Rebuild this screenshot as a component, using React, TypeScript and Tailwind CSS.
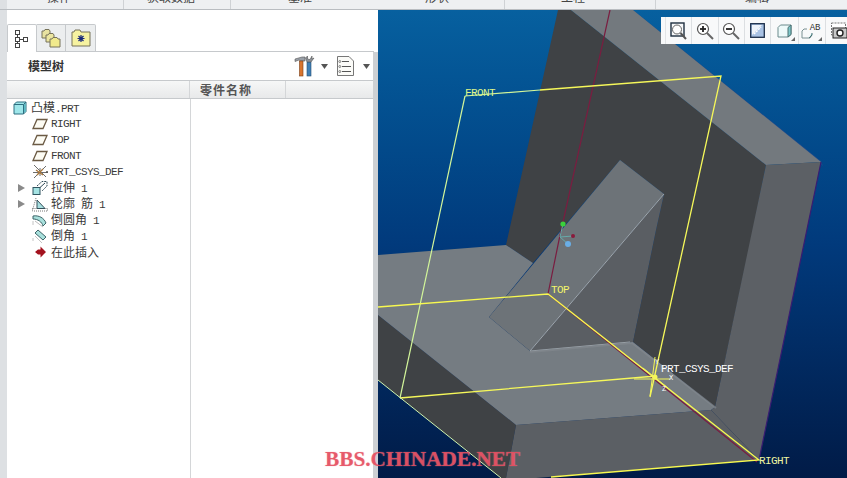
import React from 'react'

const MONO = "font-['Liberation_Mono','Noto_Sans_CJK_SC',monospace]"

// latin runs are 6px wide per char, cjk 12px, like the old system font in the picture
const Label = ({text}: {text: string}) => {
  const parts = text.match(/[\u4e00-\u9fff]+|[^\u4e00-\u9fff]+/g) || []
  return (
    <span className="inline-flex items-baseline whitespace-pre leading-[14px] text-[#3a3a3a]">
      {parts.map((p, i) =>
        /[\u4e00-\u9fff]/.test(p) ? (
          <span key={i} className="text-[12px] font-['Noto_Sans_CJK_SC',sans-serif]">{p}</span>
        ) : (
          <span key={i} className={`text-[11px] tracking-[-0.6px] ${MONO}`}>{p}</span>
        ),
      )}
    </span>
  )
}

const Plane = () => (
  <svg width="16" height="14" viewBox="0 0 16 14">
    <path d="M5 2.5H15L11 11.5H1Z" fill="#fdfcf4" stroke="#6b5a44" strokeWidth="1.3" />
  </svg>
)

const Csys = () => (
  <svg width="17" height="16" viewBox="0 0 17 16">
    <path d="M2 1L14 13M14 2L2 14M8 4V12M1 8.5H16" stroke="#6d6d6d" strokeWidth="1" />
    <path d="M4 6L11 11M11 5L5 11" stroke="#a8763a" strokeWidth="1.4" />
    <path d="M14 7l2 2M16 7l-2 2" stroke="#555" strokeWidth="0.8" />
  </svg>
)

const Extrude = () => (
  <svg width="16" height="16" viewBox="0 0 16 16">
    <rect x="1" y="7.5" width="7" height="7" fill="#a5e3e3" stroke="#2f5560" />
    <path d="M5 6L10 1.5H15V6L10 11" fill="none" stroke="#2f4a55" strokeDasharray="2 1" />
    <path d="M8 7.5L13 3" stroke="#2f4a55" />
  </svg>
)

const Rib = () => (
  <svg width="17" height="16" viewBox="0 0 17 16">
    <rect x="0.5" y="12.5" width="15" height="2.5" fill="none" stroke="#777" strokeDasharray="1 1" />
    <path d="M4 2L1 12.5" stroke="#777" strokeDasharray="1 1" />
    <path d="M5 4L13 12.5H5Z" fill="#a8dfe0" stroke="#35505a" />
  </svg>
)

const Round = () => (
  <svg width="17" height="16" viewBox="0 0 17 16">
    <path d="M1 4C7 3 12 6 14 11L11 14C10 10 6 7 1 7Z" fill="#a8e0dc" stroke="#3d6468" />
    <path d="M3 9L11 15" stroke="#bbb" />
    <path d="M1 9V13" stroke="#c4c4c4" />
  </svg>
)

const Chamfer = () => (
  <svg width="17" height="16" viewBox="0 0 17 16">
    <path d="M6 2L14 9L11 12L3 5Z" fill="#a8e0dc" stroke="#3d6468" />
    <path d="M3 8L10 15M1 10V13" stroke="#c4c4c4" />
  </svg>
)

const InsertArrow = () => (
  <svg width="15" height="14" viewBox="0 0 15 14">
    <path d="M3 7L6 4.5H8.5V1.5L14 7L8.5 12.5V9.5H6Z" fill="#a3121e" />
  </svg>
)

const PartCube = () => (
  <svg width="14" height="14" viewBox="0 0 14 14">
    <path d="M1 3.5L3.5 1H13V10.5L10.5 13H1Z" fill="#9ee6ea" stroke="#2e6f80" />
    <path d="M1 3.5H10.5V13M10.5 3.5L13 1" fill="none" stroke="#2e6f80" />
    <rect x="11" y="3" width="1.5" height="8" fill="#5cbcc6" />
  </svg>
)

const rows = [
  {text: 'RIGHT', icon: <Plane />},
  {text: 'TOP', icon: <Plane />},
  {text: 'FRONT', icon: <Plane />},
  {text: 'PRT_CSYS_DEF', icon: <Csys />},
  {text: '拉伸 1', icon: <Extrude />, arrow: true},
  {text: '轮廓 筋 1', icon: <Rib />, arrow: true},
  {text: '倒圆角 1', icon: <Round />},
  {text: '倒角 1', icon: <Chamfer />},
  {text: '在此插入', icon: <InsertArrow />},
]

const Caret = () => (
  <svg width="7" height="5" viewBox="0 0 7 5" className="block">
    <path d="M0 0H7L3.5 5Z" fill="#555" />
  </svg>
)

const TreeTabIcon = () => (
  <svg width="16" height="20" viewBox="0 0 16 20">
    <g fill="#fff" stroke="#444">
      <rect x="1.5" y="1.5" width="4" height="4" />
      <rect x="1.5" y="8.5" width="4" height="4" />
      <rect x="1.5" y="14.5" width="4" height="4" />
      <rect x="9.5" y="8.5" width="4" height="4" />
    </g>
    <path d="M3.5 5.5V8.5M3.5 12.5V14.5M5.5 10.5H9.5" stroke="#444" />
  </svg>
)

const FoldersIcon = () => (
  <svg width="20" height="20" viewBox="0 0 20 20">
    <path d="M1 3H3L4 1.5H8L9 3V10H1Z" fill="#e8e2a0" stroke="#77735a" />
    <path d="M5 7H7L8 5.5H12L13 7V14H5Z" fill="#ece69f" stroke="#77735a" />
    <path d="M9 11H11L12 9.5H16L17 11H19V19H9Z" fill="#f1ea8c" stroke="#77735a" />
  </svg>
)

const StarFolderIcon = () => (
  <svg width="20" height="18" viewBox="0 0 20 18">
    <path d="M1 3H3L4 1H9L10 3H19V17H1Z" fill="#f6f2a0" stroke="#77735a" />
    <path d="M10 6V13M6.5 9.5H13.5M7.5 7L12.5 12M12.5 7L7.5 12" stroke="#1a2a7a" strokeWidth="1.2" />
  </svg>
)

const ToolsIcon = () => (
  <svg width="21" height="22" viewBox="0 0 21 22">
    <path d="M1 4L8 2H11V6H7L5 5L1 6.5Z" fill="#9aa0a8" stroke="#555" strokeWidth="0.6" />
    <rect x="5.5" y="6" width="3.5" height="15" fill="#d9752e" stroke="#7a3d14" strokeWidth="0.6" />
    <rect x="13" y="7" width="4" height="14" fill="#3f7fb5" stroke="#274f74" strokeWidth="0.6" />
    <path d="M13 7L11.5 3L13.5 1V4L16 4.5L18 1V4L20 3L17 7Z" fill="#8b9097" stroke="#555" strokeWidth="0.6" />
  </svg>
)

const ListIcon = () => (
  <svg width="17" height="20" viewBox="0 0 17 20" className="block">
    <path d="M0.5 0.5H12L16.5 5V19.5H0.5Z" fill="#fbfbf8" stroke="#777" />
    <path d="M5 5.5H12M5 10.5H14M5 15.5H14" stroke="#555" />
    <circle cx="2.8" cy="5.5" r="1" fill="none" stroke="#555" strokeWidth="0.7" />
    <circle cx="2.8" cy="10.5" r="1" fill="none" stroke="#555" strokeWidth="0.7" />
    <circle cx="2.8" cy="15.5" r="1" fill="none" stroke="#555" strokeWidth="0.7" />
  </svg>
)

const Sidebar = () => (
  <div className="w-[378px] shrink-0 flex bg-white">
    <div className="w-[7px] bg-[#dde0e3]" />
    <div className="flex-1 flex flex-col pt-[14px]">
      <div className="h-[28px] flex items-end pr-[4px]">
        <div className="w-[30px] h-[28px] flex items-center justify-center bg-white border border-b-0 border-[#c6c9cc] rounded-t-[2px]">
          <TreeTabIcon />
        </div>
        <div className="w-[29px] h-[28px] flex items-center justify-center bg-[#eceeef] border-y border-r border-[#c6c9cc]">
          <FoldersIcon />
        </div>
        <div className="w-[30px] h-[28px] flex items-center justify-center bg-[#eceeef] border-y border-r border-[#c6c9cc] rounded-tr-[2px]">
          <StarFolderIcon />
        </div>
        <div className="flex-1 border-b border-[#c6c9cc]" />
      </div>
      <div className="flex-1 flex">
        <div className="flex-1 flex flex-col">
          <div className="h-[29px] flex items-center pl-[21px] border-b border-[#c6c9cc]">
            <span className="text-[12px] font-bold text-[#333] font-['Noto_Sans_CJK_SC',sans-serif]">模型树</span>
            <div className="ml-auto flex items-center">
              <ToolsIcon />
              <span className="ml-[6px]"><Caret /></span>
              <span className="ml-[9px]"><ListIcon /></span>
              <span className="ml-[9px] mr-[3px]"><Caret /></span>
            </div>
          </div>
          <div className="h-[18px] flex bg-linear-to-b from-[#f6f7f7] to-[#e8e9ea] border-b border-[#c6c9cc]">
            <div className="w-[183px] border-r border-[#d4d6d8]" />
            <div className="w-[96px] border-r border-[#d4d6d8] pl-[10px] flex items-center">
              <span className="text-[12px] font-bold tracking-[1px] text-[#555] font-['Noto_Sans_CJK_SC',sans-serif]">零件名称</span>
            </div>
          </div>
          <div className="flex-1 flex">
            <div className="w-[184px] border-r border-[#d4d6d8] pt-[1px]">
              <div className="h-[16px] flex items-center pl-[6px]">
                <PartCube />
                <span className="ml-[4px] flex"><Label text="凸模.PRT" /></span>
              </div>
              {rows.map((r) => (
                <div key={r.text} className="h-[16px] flex items-center relative pl-[25px]">
                  {r.arrow && (
                    <span className="absolute left-[11px] top-[4px] w-0 h-0 border-y-[4px] border-y-transparent border-l-[7px] border-l-[#8a8a8a]" />
                  )}
                  <span className="w-[19px] flex justify-start shrink-0">{r.icon}</span>
                  <Label text={r.text} />
                </div>
              ))}
            </div>
          </div>
        </div>
        <div className="w-[5px] bg-[#cdd0d3]" />
      </div>
    </div>
  </div>
)

const Mag = ({sign}: {sign?: 'plus' | 'minus'}) => (
  <svg width="18" height="18" viewBox="0 0 18 18">
    <circle cx="7" cy="7" r="5.5" fill="#fff" stroke="#555" strokeWidth="1.2" />
    <path d="M11 11L17 17" stroke="#666" strokeWidth="2" />
    {sign && <path d="M4 7H10" stroke="#222" strokeWidth="1.8" />}
    {sign === 'plus' && <path d="M7 4V10" stroke="#222" strokeWidth="1.8" />}
  </svg>
)

const ViewTools = () => (
  <div className="absolute left-[283px] top-[7px] h-[27px] w-[186px] bg-[#f8f9fa] flex items-center overflow-hidden">
    <div className="w-[5px] h-full border-r border-[#e2e4e6]" />
    <div className="w-[27px] h-full flex items-center justify-center border-r border-[#dcdfe2]">
      <svg width="17" height="18" viewBox="0 0 17 18">
        <rect x="1" y="1" width="13" height="13" fill="none" stroke="#1f2f3f" strokeWidth="1.4" />
        <circle cx="7" cy="7.5" r="4.5" fill="#fff" stroke="#666" />
        <path d="M10.5 11L16 17" stroke="#555" strokeWidth="2" />
      </svg>
    </div>
    <div className="w-[27px] h-full flex items-center justify-center border-r border-[#dcdfe2]"><Mag sign="plus" /></div>
    <div className="w-[27px] h-full flex items-center justify-center border-r border-[#dcdfe2]"><Mag sign="minus" /></div>
    <div className="w-[27px] h-full flex items-center justify-center border-r border-[#dcdfe2]">
      <svg width="15" height="15" viewBox="0 0 15 15">
        <rect x="0.7" y="0.7" width="13.6" height="13.6" fill="#a9c2e4" stroke="#1c2f4a" strokeWidth="1.3" />
        <path d="M2 2H12L2 12Z" fill="#eef3fa" />
        <path d="M4 11L11 4" stroke="#fff" strokeWidth="1.5" strokeDasharray="2 1" />
      </svg>
    </div>
    <div className="w-[28px] h-full flex items-center justify-center border-r border-[#dcdfe2] relative">
      <svg width="15" height="14" viewBox="0 0 15 14">
        <path d="M1 3.5L3.5 1H14V10.5L11 13H1Z" fill="#eefafa" stroke="#6b8a8c" />
        <path d="M11 3.5V13L14 10.5V1Z" fill="#7fc9cb" stroke="#4a7072" />
      </svg>
      <span className="absolute right-[3px] bottom-[3px] w-0 h-0 border-l-[4px] border-l-transparent border-b-[4px] border-b-[#666]" />
    </div>
    <div className="w-[28px] h-full flex items-center justify-center border-r border-[#dcdfe2] relative">
      <svg width="15" height="14" viewBox="0 0 15 14" className="mt-[2px] mr-[6px]">
        <path d="M1 6L3 4H6M1 6V13H9L11 10" fill="none" stroke="#7a9092" />
        <path d="M8 13L11 10V8" fill="#7fc9cb" stroke="#4a7072" />
      </svg>
      <span className={`absolute left-[11px] top-[6px] text-[9px] leading-[10px] text-[#333] ${MONO}`}>AB</span>
      <span className="absolute right-[3px] bottom-[3px] w-0 h-0 border-l-[4px] border-l-transparent border-b-[4px] border-b-[#666]" />
    </div>
    <div className="pl-[5px]">
      <svg width="16" height="17" viewBox="0 0 16 17">
        <rect x="0.5" y="1" width="14" height="12" fill="#fff" stroke="#777" strokeDasharray="2 1" />
        <rect x="2" y="6" width="14" height="10" fill="#c8c8c8" stroke="#222" />
        <circle cx="9" cy="11" r="3" fill="#fff" stroke="#222" strokeWidth="1.4" />
      </svg>
    </div>
  </div>
)

// the model drawing, in page coordinates
const Model = () => (
  <svg className="absolute inset-0" width="469" height="468" viewBox="378 10 469 468">
    <path d="M633 10L821 161L823 166L633 14Z" fill="#1c4a8c" />
    <path d="M558 10H571L766 165L753 230L715 407L633 342L656 230L664 194L620 160L533 263L506 245Z" fill="#3f4245" />
    <path d="M571 10H633L821 162L766 165Z" fill="#73797e" />
    <path d="M766 165L821 162L759 460L711 410L715 407Z" fill="#5c6065" />
    <path d="M378 315L516 425L506 478H501L378 380Z" fill="#3f4245" />
    <path d="M516 425L711 410L759 460L536 478H506Z" fill="#5b5f64" />
    <path d="M378 255L506 245L533 263L489 317L530 351L633 342L715 407L711 410L516 425L378 315Z" fill="#757c82" />
    <path d="M620 160L664 194L530 351L489 317Z" fill="#6d7378" />
    <path d="M664 194L656 230L633 342L530 351Z" fill="#5a5e63" />
    <path d="M664 194L530 351L630 342" fill="none" stroke="#9ea5ab" strokeWidth="1" />
    <path d="M530 352L632 343L716 408" fill="none" stroke="#81878d" strokeWidth="2" opacity="0.7" />
    <path d="M821 162L759 460" stroke="#3a1c72" strokeWidth="1.2" />

    <path d="M610 10L559 240L548 294L757 462" fill="none" stroke="#7a1d40" strokeWidth="1.2" />

    <path d="M540 90L721 76L650 397M400 398L656 376" fill="none" stroke="#f6f85a" strokeWidth="1.3" />
    <path d="M465 96L400 398M465 96L540 90" fill="none" stroke="#d2f59a" strokeWidth="1.2" />
    <path d="M378 307L548 294L759 460L551 477" fill="none" stroke="#f8f950" strokeWidth="1.3" />
    <path d="M378 380L501 478" fill="none" stroke="#d2f5b0" strokeWidth="1" />

    <path d="M563 224L560 237L573 236M560 237L568 244" fill="none" stroke="#6aa" strokeWidth="1" />
    <circle cx="563" cy="224" r="2.6" fill="#3bd13b" />
    <circle cx="573" cy="236" r="2" fill="#8a1a3c" />
    <circle cx="568" cy="244" r="3" fill="#6aaee6" />

    <path d="M634 379H670M655 357L650 396M643 368L668 388" stroke="#f4f65a" strokeWidth="1" fill="none" />
    <circle cx="655" cy="377" r="2.5" fill="#f4f65a" />

    <g className={`${MONO} tracking-[-0.6px]`} fontSize="11">
      <text x="465" y="96" fill="#dff58a">FRONT</text>
      <text x="551" y="293" fill="#f3f56a">TOP</text>
      <text x="759" y="464" fill="#f0f5a0">RIGHT</text>
      <text x="661" y="372" fill="#ffffff">PRT_CSYS_DEF</text>
      <text x="655" y="364" fontSize="7" fill="#fff">Y</text>
      <text x="669" y="380" fontSize="7" fill="#fff">X</text>
      <text x="662" y="391" fontSize="7" fill="#fff">Z</text>
    </g>
  </svg>
)

const TopTabs = () => (
  <div className="h-[10px] shrink-0 bg-[#eef0f2] border-b border-[#b9bdc1] flex overflow-hidden">
    {[
      {t: '操作', c: 'w-[124px] pl-[40px] border-l-[7px] border-l-[#dde0e3]'},
      {t: '获取数据', c: 'w-[107px] pl-[23px]'},
      {t: '基准', c: 'w-[147px] pl-[57px]'},
      {t: '形状', c: 'w-[127px] pl-[47px]'},
      {t: '工程', c: 'w-[151px] pl-[56px]'},
      {t: '编辑', c: 'flex-1 pl-[89px]'},
    ].map((x, i) => (
      <div key={x.t} className={`${x.c} h-[10px] ${i !== 2 && i !== 5 ? 'border-r border-r-[#cfd2d5]' : ''}`}>
        <div className="text-[12px] leading-[12px] -mt-[9px] text-[#444] font-['Noto_Sans_CJK_SC',sans-serif]">{x.t}</div>
      </div>
    ))}
  </div>
)

export default function App() {
  return (
    <div className="relative w-[847px] h-[478px] overflow-hidden flex flex-col bg-white">
      <TopTabs />
      <div className="flex-1 flex min-h-0">
        <Sidebar />
        <div className="flex-1 relative bg-linear-to-b from-[#07609f] via-[#013a7c] to-[#011b47]">
          <Model />
          <ViewTools />
        </div>
      </div>
      <div className="absolute left-[325px] top-[447px] text-[21.3px] leading-[24px] font-bold text-[#e03c50]/70 [text-shadow:0_0_1px_rgba(245,140,150,0.9)] font-['Liberation_Serif',serif]">
        BBS.CHINADE.NET
      </div>
    </div>
  )
}
